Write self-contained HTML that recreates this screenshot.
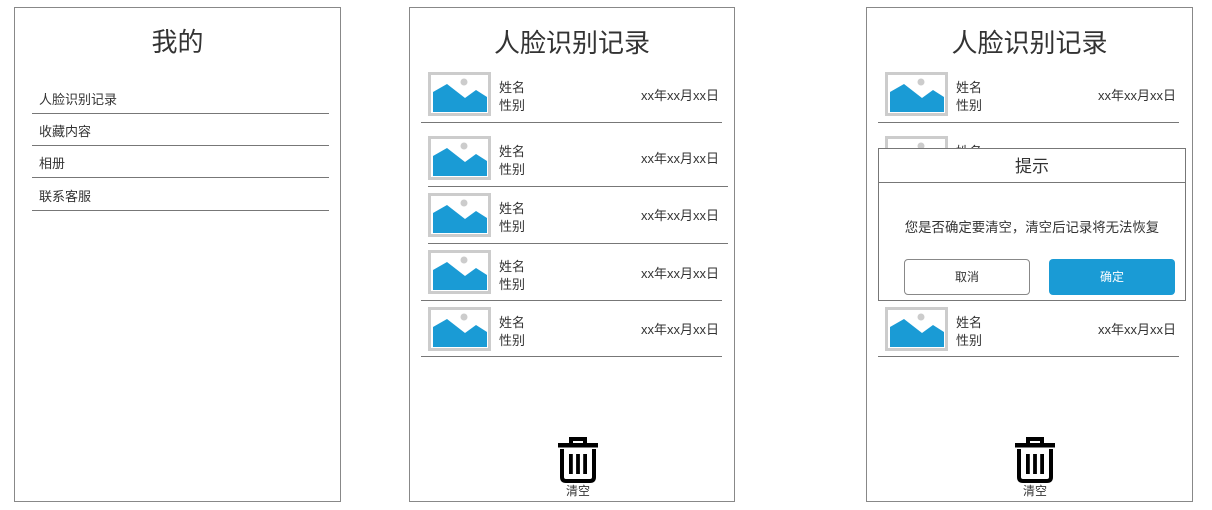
<!DOCTYPE html>
<html><head><meta charset="utf-8"><style>
body{margin:0;width:1212px;height:510px;background:#fff;position:relative;overflow:hidden;font-family:"Liberation Sans","Noto Sans CJK SC",sans-serif;color:#333}
.a{position:absolute}
.panel{position:absolute;top:7px;height:495px;border:1px solid #888;box-sizing:border-box;background:#fff}
.line{position:absolute;height:1px;background:#777}
.t{position:absolute;font-size:13px;line-height:16px;white-space:nowrap}
.n{line-height:18px}
.title{position:absolute;font-size:26px;line-height:30px;width:100%;text-align:center;color:#333}
</style></head><body>
<svg width="0" height="0" style="position:absolute"><defs><g id="img"><rect width="63" height="44" fill="#ccc"/><rect x="3" y="3" width="57" height="38" fill="#fff"/><polygon points="5,20 19,12 37,26 48,18 59,25 59,40 5,40" fill="#1a9bd5"/><circle cx="36" cy="10" r="3.5" fill="#ccc"/></g>
<g id="trash"><path d="M14 6 V2 H28 V6" fill="none" stroke="#000" stroke-width="4"/><rect x="1" y="6" width="40" height="4.5" fill="#000"/><path d="M5 12 V40 Q5 44 9 44 H33 Q37 44 37 40 V12" fill="none" stroke="#000" stroke-width="4"/><rect x="12" y="17" width="3.8" height="20" fill="#000"/><rect x="19.1" y="17" width="3.8" height="20" fill="#000"/><rect x="26.2" y="17" width="3.8" height="20" fill="#000"/></g></defs></svg>

<!-- left -->
<div class="panel" style="left:14px;width:327px">
<div class="title" style="top:19px">我的</div>
</div>
<div class="t" style="left:39px;top:92px">人脸识别记录</div><div class="line" style="left:32px;top:113px;width:297px"></div>
<div class="t" style="left:39px;top:124px">收藏内容</div><div class="line" style="left:32px;top:145px;width:297px"></div>
<div class="t" style="left:39px;top:156px">相册</div><div class="line" style="left:32px;top:177px;width:297px"></div>
<div class="t" style="left:39px;top:189px">联系客服</div><div class="line" style="left:32px;top:210px;width:297px"></div>

<!-- middle -->
<div class="panel" style="left:409px;width:326px"><div class="title" style="top:20px">人脸识别记录</div></div>
<svg class="a" style="left:428px;top:72px" width="63" height="44"><use href="#img"/></svg>
<div class="t n" style="left:499px;top:79px">姓名<br>性别</div><div class="t" style="left:641px;top:88px">xx年xx月xx日</div>
<div class="line" style="left:421px;top:122px;width:301px"></div>
<svg class="a" style="left:428px;top:136px" width="63" height="44"><use href="#img"/></svg>
<div class="t n" style="left:499px;top:143px">姓名<br>性别</div><div class="t" style="left:641px;top:151px">xx年xx月xx日</div>
<div class="line" style="left:428px;top:186px;width:300px"></div>
<svg class="a" style="left:428px;top:193px" width="63" height="44"><use href="#img"/></svg>
<div class="t n" style="left:499px;top:200px">姓名<br>性别</div><div class="t" style="left:641px;top:208px">xx年xx月xx日</div>
<div class="line" style="left:428px;top:243px;width:300px"></div>
<svg class="a" style="left:428px;top:250px" width="63" height="44"><use href="#img"/></svg>
<div class="t n" style="left:499px;top:258px">姓名<br>性别</div><div class="t" style="left:641px;top:266px">xx年xx月xx日</div>
<div class="line" style="left:421px;top:300px;width:301px"></div>
<svg class="a" style="left:428px;top:307px" width="63" height="44"><use href="#img"/></svg>
<div class="t n" style="left:499px;top:314px">姓名<br>性别</div><div class="t" style="left:641px;top:322px">xx年xx月xx日</div>
<div class="line" style="left:421px;top:356px;width:301px"></div>
<svg class="a" style="left:557px;top:437px" width="42" height="46"><use href="#trash"/></svg>
<div class="t" style="left:566px;top:483px;font-size:12px">清空</div>

<!-- right -->
<div class="panel" style="left:866px;width:327px"><div class="title" style="top:20px">人脸识别记录</div></div>
<svg class="a" style="left:885px;top:72px" width="63" height="44"><use href="#img"/></svg>
<div class="t n" style="left:956px;top:79px">姓名<br>性别</div><div class="t" style="left:1098px;top:88px">xx年xx月xx日</div>
<div class="line" style="left:878px;top:122px;width:301px"></div>
<svg class="a" style="left:885px;top:136px" width="63" height="44"><use href="#img"/></svg>
<div class="t n" style="left:956px;top:143px">姓名</div>
<svg class="a" style="left:885px;top:307px" width="63" height="44"><use href="#img"/></svg>
<div class="t n" style="left:956px;top:314px">姓名<br>性别</div><div class="t" style="left:1098px;top:322px">xx年xx月xx日</div>
<div class="line" style="left:878px;top:356px;width:301px"></div>
<div class="a" style="left:878px;top:148px;width:308px;height:153px;border:1px solid #777;box-sizing:border-box;background:#fff">
<div style="height:33px;border-bottom:1px solid #777;text-align:center;font-size:17px;line-height:35px">提示</div>
<div style="position:absolute;top:67px;width:100%;text-align:center;font-size:13.4px">您是否确定要清空，清空后记录将无法恢复</div>
<div style="position:absolute;left:25px;top:110px;width:126px;height:36px;border:1px solid #888;border-radius:4px;box-sizing:border-box;text-align:center;line-height:34px;font-size:12px">取消</div>
<div style="position:absolute;left:170px;top:110px;width:126px;height:36px;background:#1a9bd5;border-radius:4px;text-align:center;line-height:36px;font-size:12px;color:#fff">确定</div>
</div>
<svg class="a" style="left:1014px;top:437px" width="42" height="46"><use href="#trash"/></svg>
<div class="t" style="left:1023px;top:483px;font-size:12px">清空</div>
</body></html>
